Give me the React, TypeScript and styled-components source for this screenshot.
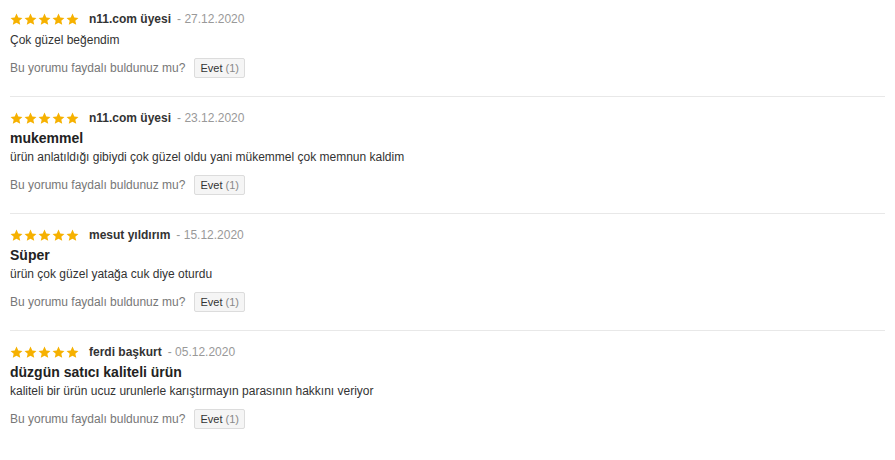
import styled, { createGlobalStyle } from "styled-components";

type Review = {
  author: string;
  date: string;
  title?: string;
  text: string;
  helpful: number;
};

const reviews: Review[] = [
  { author: "n11.com üyesi", date: "27.12.2020", text: "Çok güzel beğendim", helpful: 1 },
  {
    author: "n11.com üyesi",
    date: "23.12.2020",
    title: "mukemmel",
    text: "ürün anlatıldığı gibiydi çok güzel oldu yani mükemmel çok memnun kaldim",
    helpful: 1,
  },
  {
    author: "mesut yıldırım",
    date: "15.12.2020",
    title: "Süper",
    text: "ürün çok güzel yatağa cuk diye oturdu",
    helpful: 1,
  },
  {
    author: "ferdi başkurt",
    date: "05.12.2020",
    title: "düzgün satıcı kaliteli ürün",
    text: "kaliteli bir ürün ucuz urunlerle karıştırmayın parasının hakkını veriyor",
    helpful: 1,
  },
];

const Star = () => (
  <svg width="13" height="13" viewBox="0 0 24 24">
    <path
      d="M12 1l3.3 7.1 7.7.9-5.8 5.2 1.7 7.7L12 18l-6.9 3.9 1.7-7.7L1 9l7.7-.9z"
      fill="#f6b100"
    />
  </svg>
);

const ReviewList = () => {
  return (
    <ReviewListBlock>
      {reviews.map((r, i) => (
        <ReviewItem key={i}>
          <Header>
            <Stars>
              {[0, 1, 2, 3, 4].map((s) => (
                <Star key={s} />
              ))}
            </Stars>
            <Author>{r.author}</Author>
            <DateText>- {r.date}</DateText>
          </Header>
          {r.title ? <Title>{r.title}</Title> : null}
          <Comment>{r.text}</Comment>
          <Helpful>
            <span>Bu yorumu faydalı buldunuz mu?</span>
            <HelpfulButton>
              Evet <span className="count">({r.helpful})</span>
            </HelpfulButton>
          </Helpful>
        </ReviewItem>
      ))}
    </ReviewListBlock>
  );
};

const GlobalStyle = createGlobalStyle`
  body {
    margin: 0;
    background: #fff;
    font-family: "Liberation Sans", Arial, sans-serif;
  }
`;

const ReviewListBlock = styled.main`
  padding: 0 10px;
`;

const ReviewItem = styled.section`
  padding: 10px 0 18px;
  border-bottom: 1px solid #e8e8e8;

  & + & {
    padding-top: 12px;
  }

  &:last-child {
    border-bottom: none;
  }
`;

const Header = styled.div`
  display: flex;
  align-items: center;
  height: 18px;
  margin-bottom: 2px;
  font-size: 12px;
`;

const Stars = styled.div`
  display: flex;
  gap: 1px;
  margin-right: 10px;

  svg {
    display: block;
  }
`;

const Author = styled.span`
  font-weight: bold;
  color: #333;
  margin-right: 6px;
`;

const DateText = styled.span`
  color: #999;
`;

const Title = styled.h3`
  margin: 0;
  font-size: 14px;
  line-height: 18px;
  font-weight: bold;
  color: #222;
`;

const Comment = styled.p`
  margin: 0;
  font-size: 12px;
  line-height: 20px;
  color: #333;
`;

const Helpful = styled.div`
  display: flex;
  align-items: center;
  margin-top: 8px;
  font-size: 12px;
  color: #777;
`;

const HelpfulButton = styled.button`
  height: 20px;
  margin-left: 9px;
  padding: 0 5px;
  border: 1px solid #dcdcdc;
  border-radius: 2px;
  background: #f5f5f5;
  font-family: "Liberation Sans", Arial, sans-serif;
  font-size: 11px;
  color: #333;

  .count {
    color: #888;
  }
`;

const App = () => (
  <>
    <GlobalStyle />
    <ReviewList />
  </>
);

export default App;
